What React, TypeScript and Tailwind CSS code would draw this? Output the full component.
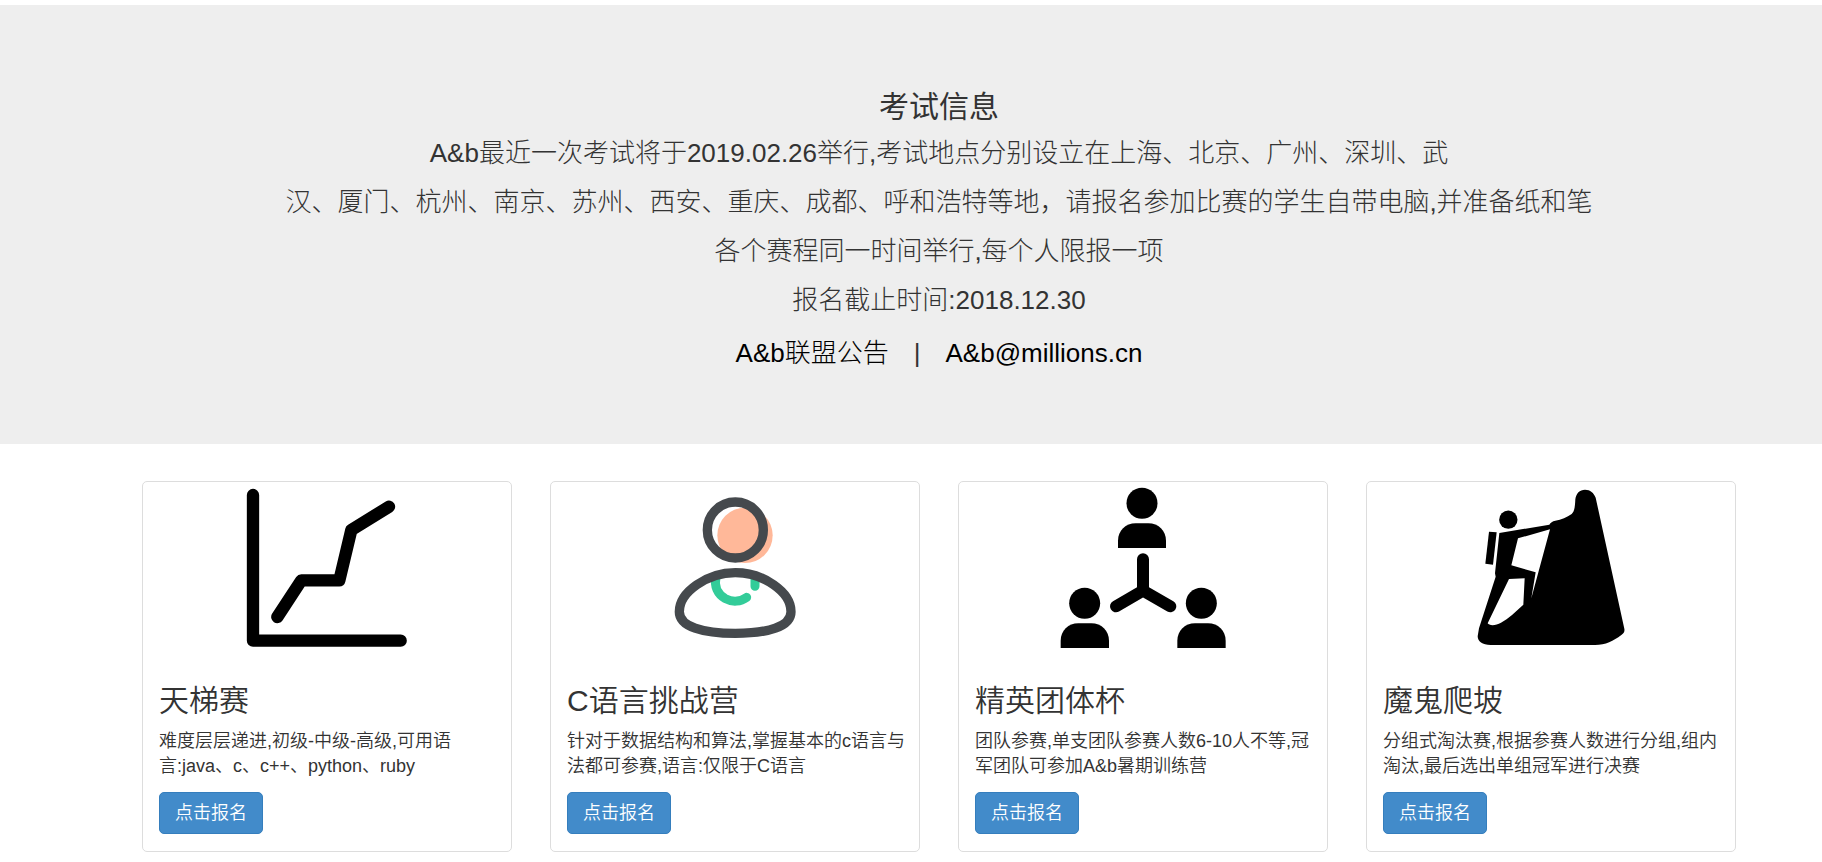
import type { ReactNode } from "react";

function ChartIcon() {
  return (
    <svg viewBox="321 51 540 486" className="h-[162px] w-[180px]" aria-hidden="true" fill="none" stroke="#000" strokeLinecap="round" strokeLinejoin="round">
      <path strokeWidth="37" d="M369 75V512H812" />
      <path strokeWidth="37" d="M442 441L514 331H628L664 180L777 110" />
    </svg>
  );
}

function PersonIcon() {
  return (
    <svg viewBox="315 51 540 486" className="h-[162px] w-[180px]" aria-hidden="true" fill="none">
      <circle cx="615" cy="196" r="83" fill="#ffb899" />
      <circle cx="586" cy="180" r="84" stroke="#45494d" strokeWidth="28" />
      <path d="M528 322C522 348 532 372 556 386C578 398 602 395 620 382M645 326V349" stroke="#33cc99" strokeWidth="27" strokeLinecap="round" />
      <path d="M586 308C670 308 753 366 753 425C753 470 684 490 586 490C488 490 418 470 418 425C418 366 502 308 586 308Z" stroke="#45494d" strokeWidth="28" />
    </svg>
  );
}

function TeamIcon() {
  return (
    <svg viewBox="309 51 540 486" className="h-[162px] w-[180px]" aria-hidden="true">
      <circle cx="576" cy="100" r="46.500" />
      <path d="M504 234V212C504 182 527 160 557 160H595C625 160 648 182 648 212V234Z" />
      <circle cx="404" cy="400" r="46.500" />
      <path d="M332 534V512C332 482 355 460 385 460H424C454 460 477 482 477 512V534Z" />
      <circle cx="754" cy="400" r="46.500" />
      <path d="M682 534V512C682 482 705 460 735 460H774C804 460 827 482 827 512V534Z" />
      <path d="M579 268V362L498 409M579 362L661 409" fill="none" stroke="#000" strokeWidth="36" strokeLinecap="round" />
    </svg>
  );
}

function ClimberIcon() {
  return (
    <svg viewBox="303 51 540 486" className="h-[162px] w-[180px]" aria-hidden="true">
      <circle cx="445" cy="149" r="27.500" />
      <path d="M387 185L410 187L399 284L376 281Z" />
      <path
        fillRule="evenodd"
        d="M418 189L568 164C572 157 577 154 586 152C604 149 621 142 635 132C644 124 645 108 646 88C648 70 659 59 675 59C691 59 701 68 707 83L793 476C795 486 790 491 784 495C760 513 737 525 705 525H392C367 525 353 514 353 499L357 475L407 320L405 310ZM474 205L454 286L527 307L514 385L570 178ZM447 327L383 460C387 467 407 468 423 458C446 445 466 426 490 404L494 325Z"
      />
    </svg>
  );
}

type Contest = { title: string; lines: [string, string]; icon: ReactNode };

const contests: Contest[] = [
  { title: "天梯赛", lines: ["难度层层递进,初级-中级-高级,可用语", "言:java、c、c++、python、ruby"], icon: <ChartIcon /> },
  { title: "C语言挑战营", lines: ["针对于数据结构和算法,掌握基本的c语言与", "法都可参赛,语言:仅限于C语言"], icon: <PersonIcon /> },
  { title: "精英团体杯", lines: ["团队参赛,单支团队参赛人数6-10人不等,冠", "军团队可参加A&b暑期训练营"], icon: <TeamIcon /> },
  { title: "魔鬼爬坡", lines: ["分组式淘汰赛,根据参赛人数进行分组,组内", "淘汰,最后选出单组冠军进行决赛"], icon: <ClimberIcon /> },
];

function ContestCard({ title, lines, icon }: Contest) {
  return (
    <article className="min-w-0 rounded-[5px] border border-[#ddd] bg-white pt-[5px]">
      <div className="flex justify-center">{icon}</div>
      <div className="px-4 pt-[35px] pb-[17px]">
        <h3 className="text-[30px] leading-[33px] font-[350]">{title}</h3>
        <p className="mt-[12px] text-[18px] leading-[25px] whitespace-nowrap">
          {lines[0]}
          <br />
          {lines[1]}
        </p>
        <button type="button" className="mt-[13px] h-[42px] cursor-pointer rounded-[5px] border border-[#357ebd] bg-[#428bca] px-[15px] text-[18px] leading-[25px] text-white">
          点击报名
        </button>
      </div>
    </article>
  );
}

export default function App() {
  return (
    <div className="bg-white pt-[5px] pb-[10px] font-['Liberation_Sans','Noto_Sans_CJK_SC',sans-serif] font-[350] text-[#333]">
      <header className="bg-[#eee] pt-[85px] pr-[86px] pb-[72px] pl-[142px] text-center">
        <h1 className="text-[30px] leading-[33px] font-normal">考试信息</h1>
        <p className="mt-[6px] text-[26px] leading-[49px] font-light">
          A&amp;b最近一次考试将于2019.02.26举行,考试地点分别设立在上海、北京、广州、深圳、武
          <br />
          汉、厦门、杭州、南京、苏州、西安、重庆、成都、呼和浩特等地，请报名参加比赛的学生自带电脑,并准备纸和笔
          <br />
          各个赛程同一时间举行,每个人限报一项
          <br />
          报名截止时间:2018.12.30
        </p>
        <nav className="mt-[10px] flex justify-center gap-[25px] text-[26px] leading-[37px] font-light">
          <a href="#notice" className="text-black">A&amp;b联盟公告</a>
          <span>|</span>
          <a href="mailto:A&amp;b@millions.cn" className="text-black">A&amp;b@millions.cn</a>
        </nav>
      </header>
      <main className="grid grid-cols-4 gap-[38px] pt-[37px] pr-[86px] pl-[142px]">
        {contests.map((contest) => (
          <ContestCard key={contest.title} {...contest} />
        ))}
      </main>
    </div>
  );
}
